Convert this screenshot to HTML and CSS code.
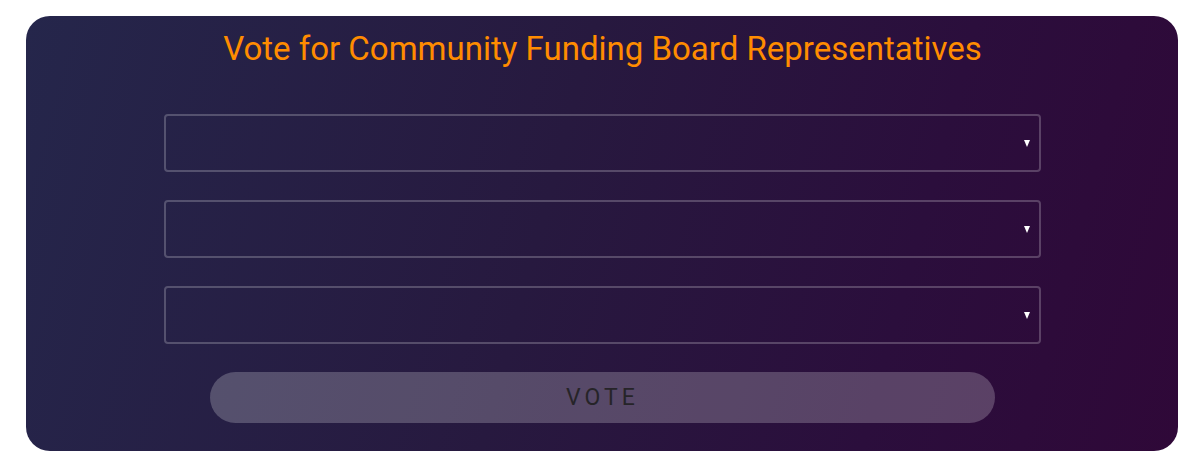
FILE: index.html
```html
<!DOCTYPE html>
<html>
<head>
<meta charset="utf-8">
<link rel="stylesheet" href="styles.css">
</head>
<body>
<div class="card">
  <h1 class="title">Vote for Community Funding Board Representatives</h1>
  <div class="fields">
    <div class="field"><select class="select"><option></option></select><span class="arrow"></span></div>
    <div class="field"><select class="select"><option></option></select><span class="arrow"></span></div>
    <div class="field"><select class="select"><option></option></select><span class="arrow"></span></div>
  </div>
  <button class="vote" disabled>VOTE</button>
</div>
</body>
</html>
```
FILE: styles.css
```css
html, body {
  margin: 0;
  padding: 0;
  background: #ffffff;
}
body {
  padding: 16px 26px 0 26px;
  font-family: Roboto, "Liberation Sans", sans-serif;
}
.card {
  width: 1152px;
  height: 435px;
  box-sizing: border-box;
  border-radius: 24px;
  background: linear-gradient(105deg, #25264b 0%, #27193f 45%, #2b0e3c 75%, #2f0838 100%);
  padding: 13px 137px 0 138px;
  display: flex;
  flex-direction: column;
  align-items: center;
}
.title {
  margin: 0;
  font-size: 33px;
  font-weight: 400;
  line-height: 40px;
  color: #ff8c00;
  text-align: center;
  white-space: nowrap;
}
.fields {
  width: 100%;
  margin-top: 45px;
  display: flex;
  flex-direction: column;
  gap: 28px;
}
.field {
  position: relative;
  height: 58px;
}
.select {
  appearance: none;
  -webkit-appearance: none;
  width: 100%;
  height: 58px;
  box-sizing: border-box;
  background: transparent;
  border: 2px solid rgba(255, 255, 255, 0.22);
  border-radius: 4px;
  color: #fff;
  font-family: inherit;
  font-size: 16px;
  outline: none;
}
.arrow {
  position: absolute;
  right: 11px;
  top: 26px;
  width: 0;
  height: 0;
  border-left: 3.5px solid transparent;
  border-right: 3.5px solid transparent;
  border-top: 7px solid #ffffff;
}
.vote {
  margin-top: 28px;
  width: 785px;
  height: 51px;
  border: none;
  border-radius: 26px;
  background: rgba(255, 255, 255, 0.22);
  color: #262428;
  font-family: inherit;
  font-size: 23px;
  letter-spacing: 4px;
  padding: 0;
}
```
